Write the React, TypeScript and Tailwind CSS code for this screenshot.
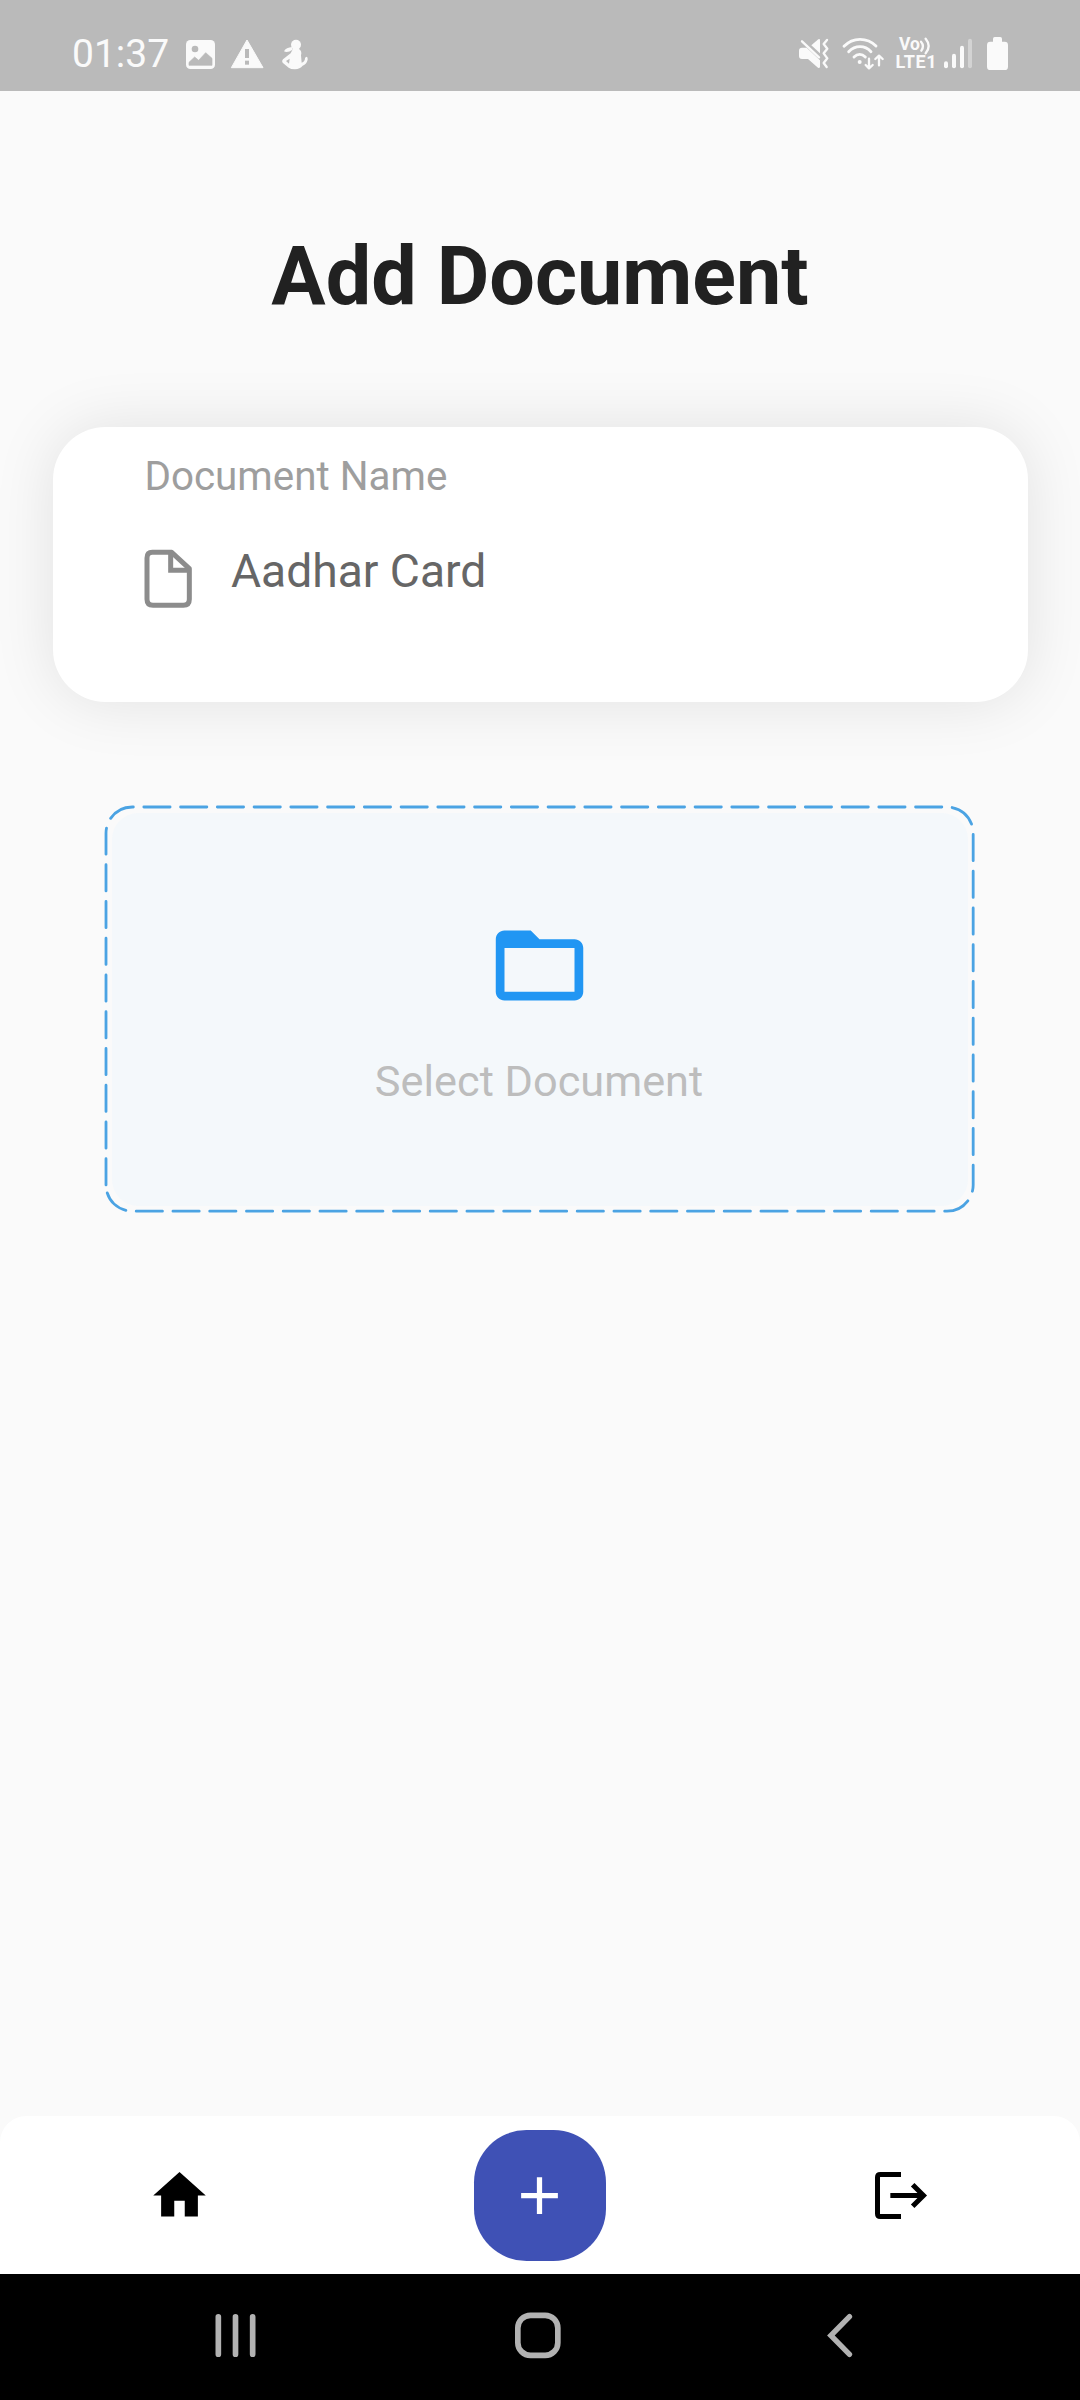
import React from "react";

function PictureIcon() {
  return (
    <svg viewBox="405 117 93 93" className="h-[31px] w-[31px]">
      <rect x="408" y="120" width="87" height="87" rx="13" fill="#fafafa" />
      <circle cx="435" cy="147" r="10" fill="#bababa" />
      <path d="M417 196V187L434 171L446 181L467 158L486 175V196Z" fill="#bababa" stroke="#bababa" strokeWidth="2" strokeLinejoin="round" />
    </svg>
  );
}

function WarningIcon() {
  return (
    <svg viewBox="540 114 104 96" className="h-[32px] w-[34.7px]">
      <path d="M591 120L544 203H639Z" fill="#fafafa" stroke="#fafafa" strokeWidth="3" strokeLinejoin="round" />
      <rect x="585" y="147" width="12" height="27" fill="#bababa" />
      <rect x="585" y="182" width="12" height="12" fill="#bababa" />
    </svg>
  );
}

function PersonIcon() {
  return (
    <svg viewBox="693 114 84 96" className="h-[32px] w-[28px]" fill="#fafafa">
      <circle cx="738" cy="134" r="15" />
      <path d="M727 141Q708 142 702 154Q712 160 728 149Z" />
      <path
        fillRule="evenodd"
        d="M729 146H746Q757 152 753 166L755 188Q765 185 765 175Q766 170 770 170Q774 171 773 179Q770 192 758 197Q750 207 735 208Q722 208 716 203L698 188Q694 183 699 178L722 160ZM719 176L708 183L717 191Z"
      />
    </svg>
  );
}

function MuteIcon() {
  return (
    <svg viewBox="54 108 96 102" className="h-[34px] w-[32px]" fill="#fafafa">
      <path d="M94 136L115 118Q120 115 120 121V160Z" />
      <path d="M66 143H80L120 181V200Q119 206 114 203L84 177H66Q57 177 57 168V152Q57 143 66 143Z" />
      <path d="M66 124L117 172" stroke="#fafafa" strokeWidth="7" strokeLinecap="round" />
      <path d="M141 120L131 132L142 146L131 160L142 175L131 189L140 201" fill="none" stroke="#fafafa" strokeWidth="7" strokeLinecap="round" strokeLinejoin="round" />
    </svg>
  );
}

function WifiIcon() {
  return (
    <svg viewBox="183 108 132 102" className="h-[34px] w-[44px]" fill="none" stroke="#fafafa" strokeWidth="8.5" strokeLinecap="round" strokeLinejoin="round">
      <path d="M192 139Q212 118 240 118T288 138" />
      <path d="M206 155Q221 140 240 140T273 155" />
      <path d="M222 171Q230 163 239 163T256 171" />
      <circle cx="239" cy="186" r="6" fill="#fafafa" stroke="none" />
      <g strokeWidth="7">
        <path d="M267 176V203M257 195L267 205L278 195" />
        <path d="M297 196V169M286 177L297 167L308 177" />
      </g>
    </svg>
  );
}

function VolteIcon() {
  return (
    <div className="flex h-[34px] w-[40px] flex-col text-[#fafafa]">
      <div className="flex h-[17px] items-start pl-[4px]">
        <span className="w-[20px] text-[17.5px] leading-[17px] font-bold">Vo</span>
        <svg viewBox="420 108 36 60" className="h-[20px] w-[12px]" fill="none" stroke="#fafafa" strokeWidth="7" strokeLinecap="round">
          <path d="M426 125Q437 138 427 152" />
          <path d="M440 116Q458 138 440 160" />
        </svg>
      </div>
      <span className="pl-[0.5px] text-[18px] leading-[18px] font-bold tracking-[0.6px]">LTE1</span>
    </div>
  );
}

function SignalIcon() {
  return (
    <svg viewBox="489 108 90 102" className="h-[34px] w-[30px]" fill="#fafafa">
      <rect x="492" y="184" width="12" height="21" rx="6" />
      <rect x="516" y="161" width="12" height="44" rx="6" />
      <rect x="540" y="137" width="12" height="68" rx="6" />
      <rect x="564" y="116" width="12" height="89" rx="6" opacity="0.4" />
    </svg>
  );
}

function BatteryIcon() {
  return (
    <svg viewBox="618 108 69 102" className="h-[34px] w-[23px]" fill="#fafafa">
      <rect x="639" y="111" width="27" height="24" rx="5" />
      <rect x="621" y="125" width="63" height="85" rx="10" />
    </svg>
  );
}

function StatusBar() {
  return (
    <header className="flex h-[91px] shrink-0 items-start justify-between bg-[#bababa] pr-[71px] pl-[72px]">
      <div className="flex items-start">
        <span className="mt-[31px] w-[113px] text-[39px] leading-[46px] text-[#fafafa]">01:37</span>
        <div className="mt-[38px] flex items-start">
          <div className="mt-px"><PictureIcon /></div>
          <div className="ml-[14px]"><WarningIcon /></div>
          <div className="ml-[16.3px]"><PersonIcon /></div>
        </div>
      </div>
      <div className="mt-[36px] flex items-start">
        <MuteIcon />
        <div className="ml-[11px]"><WifiIcon /></div>
        <div className="ml-[10px]"><VolteIcon /></div>
        <div className="ml-[8px]"><SignalIcon /></div>
        <div className="ml-[13px]"><BatteryIcon /></div>
      </div>
    </header>
  );
}

function DocumentCard() {
  return (
    <section className="mx-[52.5px] mt-[101.6px] h-[275.6px] shrink-0 rounded-[52.5px] bg-white pt-[26px] pl-[91.9px] shadow-[0_0_63px_rgba(0,0,0,0.1)]">
      <p className="text-[40.4px] leading-[48px] text-[#9e9e9e]">Document Name</p>
      <div className="mt-[43.4px] flex items-start gap-[38.5px]">
        <svg viewBox="372 477 144 180" className="mt-[5px] h-[60px] w-[48px]" fill="none" stroke="#8c8c8c" strokeWidth="15" strokeLinejoin="round">
          <path d="M397 487H455L508 536V628Q508 646 490 646H399Q381 646 381 628V504Q381 487 397 487Z" />
          <path d="M452 487V541H508" strokeLinejoin="miter" />
        </svg>
        <p className="text-[46.2px] leading-[54px] text-[#666666]">Aadhar Card</p>
      </div>
    </section>
  );
}

function DropZone() {
  return (
    <section className="relative mx-auto mt-[105.2px] h-[404.2px] w-[867.2px] shrink-0 p-[5.25px]">
      <svg viewBox="0 0 867.2 404.2" className="absolute inset-0 h-full w-full overflow-visible">
        <path
          d="M0 377.95V26.25A26.25 26.25 0 0 1 26.25 0H840.95A26.25 26.25 0 0 1 867.2 26.25V377.95A26.25 26.25 0 0 1 840.95 404.2H26.25A26.25 26.25 0 0 1 0 377.95"
          fill="none"
          stroke="#4ba3e3"
          strokeWidth="2.8"
          strokeLinecap="round"
          strokeDasharray="26.25 10.5"
        />
      </svg>
      <div className="flex h-full flex-col items-center rounded-[26.25px] bg-[#f4f8fb] pt-[100px]">
        <svg viewBox="0 0 24 24" className="mr-px h-[105px] w-[105px]" fill="#2196f3">
          <path d="M20 6h-8l-2-2H4c-1.1 0-1.99.9-1.99 2L2 18c0 1.1.9 2 2 2h16c1.1 0 2-.9 2-2V8c0-1.1-.9-2-2-2zm0 12H4V8h16v10z" />
        </svg>
        <p className="mt-[38px] pr-[2px] text-[43.3px] leading-[51px] text-[#bdbdbd]">Select Document</p>
      </div>
    </section>
  );
}

function BottomBar() {
  return (
    <nav className="mt-auto grid h-[157.7px] shrink-0 grid-cols-3 place-items-center rounded-t-[26.25px] bg-white">
      <svg viewBox="0 0 24 24" className="mr-[2px] h-[63px] w-[63px]">
        <path d="M10 20v-6h4v6h5v-8h3L12 3 2 12h3v8z" />
      </svg>
      <div className="flex h-[131.25px] w-[131.25px] items-center justify-center rounded-[52.5px] bg-[#3f51b5]">
        <svg viewBox="0 0 24 24" className="mr-px h-[63px] w-[63px]" fill="#fff">
          <path d="M19 13h-6v6h-2v-6H5v-2h6V5h2v6h6v2z" />
        </svg>
      </div>
      <svg viewBox="282 240 162 153" className="ml-[2px] h-[51px] w-[54px]" fill="none" stroke="#000" strokeWidth="15">
        <path d="M363 253.500H301Q292.500 253.500 292.500 262V371Q292.500 379.500 301 379.500H363" />
        <path d="M331 316.500H430M398 284L430.500 316.500L398 349" />
      </svg>
    </nav>
  );
}

function SystemNav() {
  return (
    <footer className="flex h-[126px] shrink-0 items-start bg-black pt-[36px] pl-[215px]">
      <svg viewBox="645 660 126 150" className="h-[50px] w-[42px]" stroke="#b2b2b2" strokeWidth="17" strokeLinecap="round">
        <path d="M655 680.500V792.500M706.500 680.500V792.500M758 680.500V792.500" />
      </svg>
      <svg viewBox="342 660 144 150" className="ml-[257px] h-[50px] w-[48px]" fill="none" stroke="#b2b2b2" strokeWidth="17">
        <rect x="353.500" y="676" width="120" height="120" rx="38" />
      </svg>
      <svg viewBox="138 660 84 150" className="ml-[264px] h-[50px] w-[28px]" fill="none" stroke="#b2b2b2" strokeWidth="16" strokeLinecap="round">
        <path d="M208.500 680L152.500 736.500L208.500 793" />
      </svg>
    </footer>
  );
}

export default function App() {
  return (
    <div className="flex h-[2400px] w-[1080px] flex-col overflow-hidden bg-[#fafafa] font-['Roboto',sans-serif]">
      <StatusBar />
      <h1 className="mt-[138px] shrink-0 text-center text-[80.85px] leading-[96px] font-bold text-[#212121]">Add Document</h1>
      <DocumentCard />
      <DropZone />
      <BottomBar />
      <SystemNav />
    </div>
  );
}
